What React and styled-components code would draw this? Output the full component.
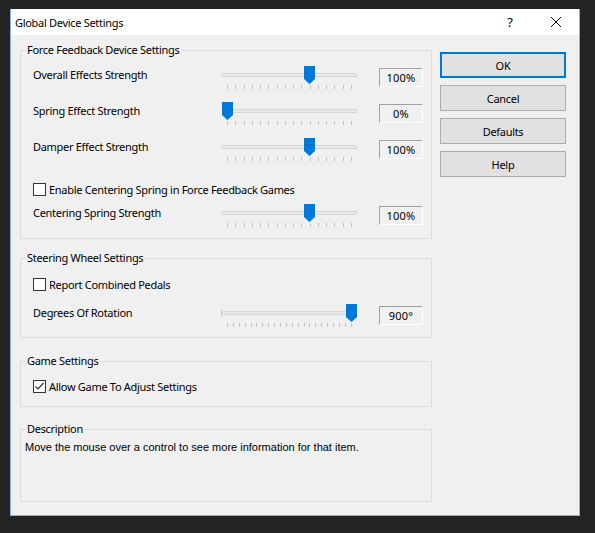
import React from "react";
import styled, { createGlobalStyle } from "styled-components";

const GlobalStyle = createGlobalStyle`
  html, body {
    margin: 0;
    padding: 0;
    background: #232323;
  }
  body {
    font-family: "Noto Sans", "Open Sans", sans-serif;
    font-size: 11px;
    letter-spacing: -0.3px;
    color: #000;
  }
`;

const Screen = styled.div`
  width: 595px;
  height: 533px;
  padding: 9px 0 0 10px;
  box-sizing: border-box;
`;

const Window = styled.div`
  width: 570px;
  height: 507px;
  box-sizing: border-box;
  border: 1px solid #8eb0de;
  border-top: none;
  background: #f0f0f0;
  display: flex;
  flex-direction: column;
`;

const TitleBar = styled.div`
  height: 26px;
  background: #fff;
  display: flex;
  align-items: center;
  padding-left: 4px;
`;

const Title = styled.div`
  flex: 1;
`;

const Caption = styled.div`
  width: 46px;
  height: 26px;
  display: flex;
  align-items: center;
  justify-content: center;
  font-size: 13px;
`;

const Body = styled.div`
  flex: 1;
  display: flex;
  gap: 8px;
  padding: 7px 12px 0 9px;
`;

const LeftCol = styled.div`
  width: 412px;
  display: flex;
  flex-direction: column;
`;

const GroupBox = styled.fieldset`
  margin: ${(p) => p.$top || 0}px 0 0 0;
  border: 1px solid #dcdcdc;
  padding: 0 8px ${(p) => p.$bottom || 0}px 4px;
  min-width: 0;
`;

const Legend = styled.legend`
  padding: 0 2px;
  line-height: 16px;
`;

const SliderRow = styled.div`
  display: flex;
  align-items: flex-start;
  height: ${(p) => p.$h || 36}px;
  margin-top: ${(p) => p.$top || 0}px;
  padding-left: 8px;
`;

const RowLabel = styled.div`
  width: 189px;
  margin-top: 1px;
  line-height: 16px;
`;

const SliderBox = styled.div`
  position: relative;
  width: 135px;
  height: 26px;
`;

const Track = styled.div`
  position: absolute;
  left: 0;
  top: 7px;
  width: 135px;
  height: 4px;
  box-sizing: border-box;
  background: #e7eaea;
  border: 1px solid #d6d6d6;
`;

const RangeMark = styled.div`
  position: absolute;
  left: -1px;
  top: 5px;
  width: 1px;
  height: 8px;
  background: #d0d0d0;
`;

const Ticks = styled.div`
  position: absolute;
  left: 5px;
  top: 19px;
  width: 125px;
  height: 4px;
  display: flex;
  justify-content: space-between;
`;

const Tick = styled.span`
  width: 1px;
  height: 4px;
  background: #c4c4c4;
`;

const Thumb = styled.svg`
  position: absolute;
  top: 0;
  width: 11px;
  height: 18px;
`;

const ValueBox = styled.div`
  margin-left: 22px;
  margin-top: 2px;
  width: 44px;
  height: 19px;
  box-sizing: border-box;
  border-top: 1px solid #a0a0a0;
  border-left: 1px solid #a0a0a0;
  border-right: 1px solid #fff;
  border-bottom: 1px solid #fff;
  display: flex;
  align-items: center;
  justify-content: center;
  letter-spacing: 0.2px;
`;

const CheckRow = styled.label`
  display: flex;
  align-items: center;
  height: 16px;
  margin-top: ${(p) => p.$top || 0}px;
  padding-left: 8px;
`;

const Box = styled.span`
  width: 13px;
  height: 13px;
  box-sizing: border-box;
  border: 1px solid #333;
  background: #fff;
  margin-right: 3px;
  display: flex;
`;

const DescText = styled.div`
  margin-top: 2px;
  height: 62px;
  font-family: "Liberation Sans", Arial, sans-serif;
  font-size: 11px;
  letter-spacing: 0;
  line-height: 16px;
`;

const RightCol = styled.div`
  width: 126px;
  padding-top: 10px;
  display: flex;
  flex-direction: column;
  gap: 7px;
`;

const Button = styled.button`
  height: 26px;
  box-sizing: border-box;
  background: #e1e1e1;
  border: ${(p) => (p.$primary ? "2px solid #0078d7" : "1px solid #adadad")};
  font-family: inherit;
  font-size: 11px;
  letter-spacing: -0.3px;
  color: #000;
  padding: 0;
`;

const Slider = ({ value, ticks = 16, rangeMark }) => (
  <SliderBox>
    <Track />
    {rangeMark && <RangeMark />}
    <Ticks>
      {Array.from({ length: ticks }).map((_, i) => (
        <Tick key={i} />
      ))}
    </Ticks>
    <Thumb viewBox="0 0 11 18" style={{ left: `${value * 124}px` }}>
      <path d="M0 0 H11 V13 L5.5 18 L0 13 Z" fill="#0078d7" />
    </Thumb>
  </SliderBox>
);

const Row = ({ label, value, text, ticks, rangeMark, h, top }) => (
  <SliderRow $h={h} $top={top}>
    <RowLabel>{label}</RowLabel>
    <Slider value={value} ticks={ticks} rangeMark={rangeMark} />
    <ValueBox>{text}</ValueBox>
  </SliderRow>
);

const Check = ({ label, checked, top }) => (
  <CheckRow $top={top}>
    <Box>
      {checked && (
        <svg width="11" height="11" viewBox="0 0 11 11">
          <polyline
            points="1.5,5.5 4,8 9.5,2"
            fill="none"
            stroke="#333"
            strokeWidth="1.2"
          />
        </svg>
      )}
    </Box>
    {label}
  </CheckRow>
);

export default function App() {
  return (
    <>
      <GlobalStyle />
      <Screen>
        <Window>
          <TitleBar>
            <Title>Global Device Settings</Title>
            <Caption>?</Caption>
            <Caption>
              <svg width="10" height="10" viewBox="0 0 10 10">
                <path d="M0 0 L10 10 M10 0 L0 10" stroke="#000" strokeWidth="1" />
              </svg>
            </Caption>
          </TitleBar>
          <Body>
            <LeftCol>
              <GroupBox>
                <Legend>Force Feedback Device Settings</Legend>
                <Row label="Overall Effects Strength" value={0.66} text="100%" top={8} />
                <Row label="Spring Effect Strength" value={0} text="0%" />
                <Row label="Damper Effect Strength" value={0.66} text="100%" />
                <Check label="Enable Centering Spring in Force Feedback Games" top={7} />
                <Row label="Centering Spring Strength" value={0.66} text="100%" top={7} h={34} />
              </GroupBox>
              <GroupBox $top={11}>
                <Legend>Steering Wheel Settings</Legend>
                <Check label="Report Combined Pedals" top={10} />
                <Row
                  label="Degrees Of Rotation"
                  value={1}
                  text="900°"
                  ticks={22}
                  rangeMark
                  top={12}
                  h={33}
                />
              </GroupBox>
              <GroupBox $top={15} $bottom={12}>
                <Legend>Game Settings</Legend>
                <Check label="Allow Game To Adjust Settings" checked top={9} />
              </GroupBox>
              <GroupBox $top={14}>
                <Legend>Description</Legend>
                <DescText>
                  Move the mouse over a control to see more information for that item.
                </DescText>
              </GroupBox>
            </LeftCol>
            <RightCol>
              <Button $primary>OK</Button>
              <Button>Cancel</Button>
              <Button>Defaults</Button>
              <Button>Help</Button>
            </RightCol>
          </Body>
        </Window>
      </Screen>
    </>
  );
}
